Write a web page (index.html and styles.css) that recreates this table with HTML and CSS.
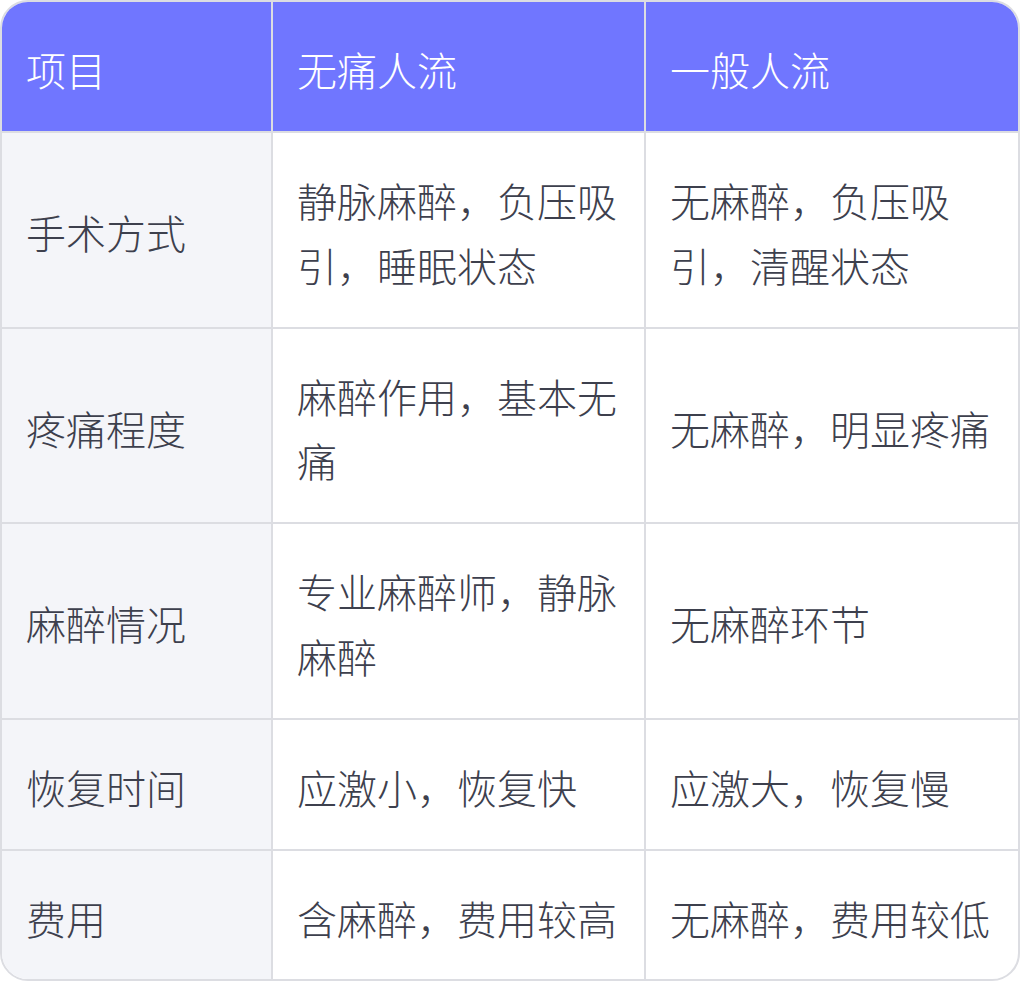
FILE: index.html
```html
<!DOCTYPE html>
<html lang="zh-CN">
<head>
<meta charset="utf-8">
<link rel="stylesheet" href="styles.css">
</head>
<body>
<div class="card">
  <table class="compare">
    <colgroup>
      <col class="c1">
      <col class="c2">
      <col class="c3">
    </colgroup>
    <thead>
      <tr>
        <th>项目</th>
        <th>无痛人流</th>
        <th>一般人流</th>
      </tr>
    </thead>
    <tbody>
      <tr>
        <td>手术方式</td>
        <td>静脉麻醉，负压吸引，睡眠状态</td>
        <td>无麻醉，负压吸引，清醒状态</td>
      </tr>
      <tr>
        <td>疼痛程度</td>
        <td>麻醉作用，基本无痛</td>
        <td>无麻醉，明显疼痛</td>
      </tr>
      <tr>
        <td>麻醉情况</td>
        <td>专业麻醉师，静脉麻醉</td>
        <td>无麻醉环节</td>
      </tr>
      <tr>
        <td>恢复时间</td>
        <td>应激小，恢复快</td>
        <td>应激大，恢复慢</td>
      </tr>
      <tr>
        <td>费用</td>
        <td>含麻醉，费用较高</td>
        <td>无麻醉，费用较低</td>
      </tr>
    </tbody>
  </table>
</div>
</body>
</html>
```

FILE: styles.css
```css
html, body {
  margin: 0;
  padding: 0;
  background: #ffffff;
}

.card {
  box-sizing: border-box;
  width: 1020px;
  height: 981px;
  border: 2px solid #dcdde2;
  border-radius: 28px;
  overflow: hidden;
  background: #ffffff;
}

.compare {
  width: 100%;
  height: 100%;
  border-collapse: separate;
  border-spacing: 0;
  table-layout: fixed;
  font-family: "Noto Sans CJK SC", "Noto Sans", sans-serif;
  font-size: 40px;
  font-weight: 300;
  line-height: 64.5px;
  color: #3d404d;
}

.c1 { width: 269px; }
.c2 { width: 373px; }
.c3 { width: 374px; }

.compare th,
.compare td {
  padding: 35px 24px 29.5px 24px;
  text-align: left;
  vertical-align: middle;
  font-weight: 300;
}

.compare th + th,
.compare td + td {
  border-left: 2px solid #dcdde2;
}

.compare thead th {
  background: #7076ff;
  color: #ffffff;
}

.compare tbody td {
  border-top: 2px solid #dcdde2;
}

.compare tbody td:first-child {
  background: #f4f5f9;
}
```
